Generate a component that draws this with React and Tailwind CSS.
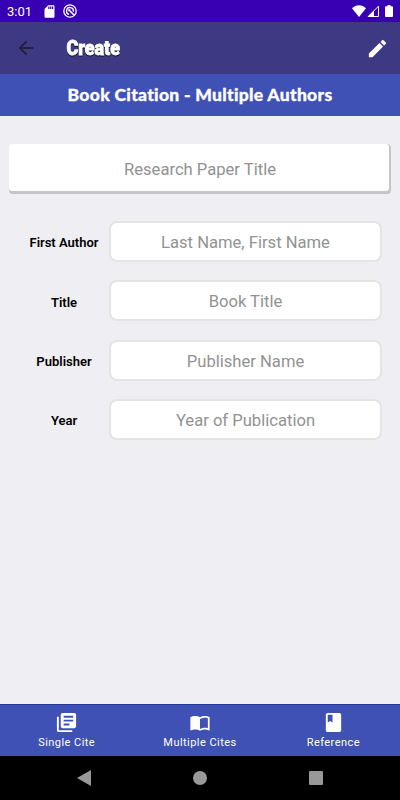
import React from 'react';
import { MdArrowBack, MdEdit, MdLibraryBooks, MdClass, MdSdCard } from 'react-icons/md';

const fields = [
  { label: 'First Author', placeholder: 'Last Name, First Name' },
  { label: 'Title', placeholder: 'Book Title' },
  { label: 'Publisher', placeholder: 'Publisher Name' },
  { label: 'Year', placeholder: 'Year of Publication' },
];

function OpenBookIcon() {
  return (
    <svg viewBox="0 0 24 24" className="my-px h-[21px] w-[22px]" fill="currentColor">
      <path d="M21 5c-1.1-.35-2.3-.5-3.500-.5-1.950 0-4.050.4-5.500 1.500-1.450-1.100-3.550-1.500-5.500-1.500S2.450 4.900 1 6v14.650c0 .25.25.5.5.5.1 0 .15-.05.25-.05C3.100 20.450 5.050 20 6.500 20c1.950 0 4.050.4 5.500 1.500 1.350-.85 3.800-1.500 5.500-1.500 1.650 0 3.350.3 4.750 1.050.1.050.15.050.25.050.25 0 .5-.25.5-.5V6c-.6-.45-1.250-.75-2-1zm0 13.500c-1.100-.35-2.300-.5-3.500-.5-1.700 0-4.150.65-5.500 1.500V8c1.350-.85 3.800-1.500 5.500-1.500 1.200 0 2.400.15 3.500.5v11.500z" />
    </svg>
  );
}

function StatusBar() {
  return (
    <div className="flex h-[22px] items-center bg-[#3700b3] pr-[7px] pl-[7px] text-white">
      <span className="w-[35px] pt-px text-[13px] leading-[21px]">3:01</span>
      <MdSdCard className="h-[15px] w-[15px]" />
      <svg viewBox="0 0 14 14" className="ml-[6px] h-[14px] w-[14px]" fill="none" stroke="currentColor">
        <circle cx="7" cy="7" r="6.200" strokeWidth="1.300" />
        <path d="M6.200 10.300A3.400 3.400 0 1 1 10.300 7.600" strokeWidth="1.400" />
        <path d="M6 6l5 5" strokeWidth="1.600" />
        <path d="M5.300 5.300h2.400l-2.400 2.400z" fill="currentColor" stroke="none" />
      </svg>
      <div className="ml-auto flex items-center">
        <svg viewBox="0 0 14 12" className="h-[12px] w-[14px]" fill="currentColor">
          <path d="M7 12L0 3.200C4-.8 10-.8 14 3.200z" />
        </svg>
        <svg viewBox="0 0 12 12" className="ml-px h-[12px] w-[12px]">
          <path d="M1.200 11.500L11.500 1.200v10.300z" fill="none" stroke="currentColor" />
          <path d="M1 11.500L7 5.500v6z" fill="currentColor" />
        </svg>
        <svg viewBox="0 0 8 12" className="ml-[6px] h-[12px] w-[8px]" fill="currentColor">
          <path d="M2.500 0h3v1.300H7a1 1 0 0 1 1 1V11a1 1 0 0 1-1 1H1a1 1 0 0 1-1-1V2.300a1 1 0 0 1 1-1h1.500z" />
        </svg>
      </div>
    </div>
  );
}

function Toolbar() {
  return (
    <div className="flex h-[52px] items-center bg-[#3d3983] pr-[11px] pl-[15px]">
      <MdArrowBack className="h-[22px] w-[22px] text-[#211f3c]" />
      <svg className="ml-[28px] h-[30px] w-[70px] overflow-visible drop-shadow-[0.5px_1px_0.5px_#111]">
        <text
          x="1.500"
          y="22"
          textLength="53.500"
          lengthAdjust="spacingAndGlyphs"
          className="fill-white stroke-white stroke-[0.8px] font-['Roboto'] text-[20.500px] font-black"
        >
          Create
        </text>
      </svg>
      <MdEdit className="ml-auto h-[23px] w-[23px] text-white" />
    </div>
  );
}

// 하단 탭 아이템
function NavItem({ icon, label }) {
  return (
    <div className="flex flex-1 flex-col items-center pt-[6px] text-white">
      {icon}
      <span className="mt-px text-[11px] leading-[15px] tracking-[0.45px] whitespace-nowrap">{label}</span>
    </div>
  );
}

function App() {
  return (
    <div className="flex h-[800px] w-[400px] flex-col overflow-hidden bg-[#efeef3] font-['Roboto',sans-serif]">
      <StatusBar />
      <Toolbar />
      <div className="flex h-[42px] items-center justify-center bg-[#3f51b5]">
        <h1 className="font-['Lato',sans-serif] text-[17.500px] font-black tracking-[0.3px] text-white [-webkit-text-stroke:0.3px_white]">
          Book Citation - Multiple Authors
        </h1>
      </div>

      <main className="flex-1 pt-[28px]">
        <div className="mx-[9px] h-[50px] w-[382px] rounded-[4px] bg-[#c5c5c7] pr-[2px] pb-[3px]">
          <input
            className="h-[47px] w-full rounded-[3px] bg-white pt-[4px] pl-[2px] text-center text-[16.600px] outline-none placeholder:text-[#929292]"
            placeholder="Research Paper Title"
          />
        </div>
        <div className="mt-[27px] flex flex-col gap-[18.300px]">
          {fields.map((f) => (
            <div key={f.label} className="flex items-center">
              <label className="w-[109px] pt-[3px] pl-[19px] text-center text-[13px] font-semibold whitespace-nowrap text-black">{f.label}</label>
              <input
                className="h-[41px] w-[273px] rounded-[8px] border-2 border-[#e4e4e5] bg-white pt-[2px] text-center text-[16.600px] outline-none placeholder:text-[#929292]"
                placeholder={f.placeholder}
              />
            </div>
          ))}
        </div>
      </main>

      <nav className="flex h-[52px] border-t border-[#2636a0] bg-[#3f51b5]">
        <NavItem icon={<MdLibraryBooks className="h-[23px] w-[23px]" />} label="Single Cite" />
        <NavItem icon={<OpenBookIcon />} label="Multiple Cites" />
        <NavItem icon={<MdClass className="h-[23px] w-[23px]" />} label="Reference" />
      </nav>
      <div className="flex h-[44px] items-center justify-between bg-black pr-[77px] pl-[77px] text-[#999]">
        <svg viewBox="0 0 14 16" className="h-[16px] w-[14px]" fill="currentColor">
          <path d="M0 8L14 0v16z" />
        </svg>
        <div className="h-[14px] w-[14px] rounded-full bg-[#999]" />
        <div className="h-[14px] w-[14px] rounded-[1px] bg-[#999]" />
      </div>
    </div>
  );
}

export default App;
